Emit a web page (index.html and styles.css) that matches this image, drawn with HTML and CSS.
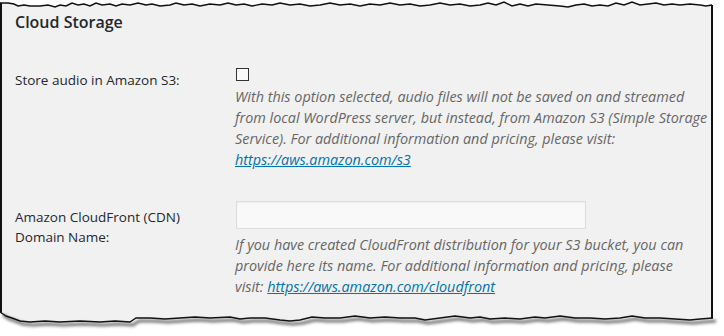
FILE: index.html
```html
<!DOCTYPE html>
<html lang="en">

<head>
    <meta charset="UTF-8">
    <meta name="viewport" content="width=device-width, initial-scale=1.0">
    <title>Cloud Storage</title>
    <link rel="stylesheet" href="styles.css">
</head>

<body>

    <div class="page">
        <div class="sheet">
            <h2 class="title">Cloud Storage</h2>

            <div class="form-row row-audio">
                <label class="row-label" for="storeS3">Store audio in Amazon S3:</label>
                <div class="row-field">
                    <input type="checkbox" id="storeS3" class="checkbox">
                    <p class="description">With this option selected, audio files will not be saved on and streamed from local WordPress server, but instead, from Amazon S3 (Simple Storage Service). For additional information and pricing, please visit: <a href="#">https://aws.amazon.com/s3</a></p>
                </div>
            </div>

            <div class="form-row row-cdn">
                <label class="row-label" for="cdnDomain">Amazon CloudFront (CDN) Domain Name:</label>
                <div class="row-field">
                    <input type="text" id="cdnDomain" class="text-input">
                    <p class="description">If you have created CloudFront distribution for your S3 bucket, you can provide here its name. For additional information and pricing, please visit: <a href="#">https://aws.amazon.com/cloudfront</a></p>
                </div>
            </div>
        </div>

        <!-- torn paper edges drawn over the sheet -->
        <svg class="edges" width="724" height="336" viewBox="0 0 724 336">
            <defs>
                <filter id="soft" x="-5%" y="-50%" width="110%" height="200%">
                    <feGaussianBlur stdDeviation="1.6" />
                </filter>
            </defs>
            <path fill="#fff" d="M0,0 H724 V336 H713 V5 L711,5 706,6 700,5 690,4 680,5 672,4 664,5 656,3 648,4 640,5 632,2 624,5 616,3 608,6 600,5 592,6 584,4 576,5 568,7 560,6 548,5 536,4 528,6 520,4 512,6 504,2 496,5 488,3 480,5 470,6 460,4 450,5 440,3 430,5 420,6 410,4 400,5 390,3 380,5 370,4 360,6 350,4 340,5 330,3 320,5 310,6 300,4 290,5 280,3 272,5 262,4 252,6 244,4 236,5 228,3 220,5 210,4 200,6 192,4 184,5 176,3 170,5 160,6 152,4 146,5 138,3 130,5 122,4 116,6 110,4 102,5 96,3 90,6 84,4 78,5 72,3 66,6 60,5 55,7 48,5 40,6 30,6 24,5 18,6 14,4 8,3 0,3 Z" />
            <polyline fill="none" stroke="#111" stroke-width="1.4" points="0,3 8,3 14,4 18,6 24,5 30,6 40,6 48,5 55,7 60,5 66,6 72,3 78,5 84,4 90,6 96,3 102,5 110,4 116,6 122,4 130,5 138,3 146,5 152,4 160,6 170,5 176,3 184,5 192,4 200,6 210,4 220,5 228,3 236,5 244,4 252,6 262,4 272,5 280,3 290,5 300,4 310,6 320,5 330,3 340,5 350,4 360,6 370,4 380,5 390,3 400,5 410,4 420,6 430,5 440,3 450,5 460,4 470,6 480,5 488,3 496,5 504,2 512,6 520,4 528,6 536,4 548,5 560,6 568,7 576,5 584,4 592,6 600,5 608,6 616,3 624,5 632,2 640,5 648,4 656,3 664,5 672,4 680,5 690,4 700,5 706,6 712,5" />

            <path fill="#fff" d="M0,312 L6,316 12,318 20,321 30,322 45,321 60,322 80,321 100,322 115,321 130,322 136,318 150,318 165,319 180,318 195,317 210,318 230,317 240,319 250,318 265,318 280,320 290,321 300,320 312,317 325,318 340,318 355,316 370,318 385,317 400,318 415,318 425,320 440,318 455,316 470,318 480,317 490,319 505,318 520,319 535,317 545,318 560,316 575,318 590,318 605,319 620,318 632,316 645,318 660,318 675,319 690,320 700,319 713,318 H724 V336 H0 Z" />
            <polyline fill="none" stroke="#000" stroke-opacity="0.55" stroke-width="3" filter="url(#soft)" points="3,315 9,319 15,321 23,324 33,325 48,324 63,325 83,324 103,325 118,324 133,325 139,321 153,321 168,322 183,321 198,320 213,321 233,320 243,322 253,321 268,321 283,323 293,324 303,323 315,320 328,321 343,321 358,319 373,321 388,320 403,321 418,321 428,323 443,321 458,319 473,321 483,320 493,322 508,321 523,322 538,320 548,321 563,319 578,321 593,321 608,322 623,321 635,319 648,321 663,321 678,322 693,323 703,322 716,321" />
            <polyline fill="none" stroke="#111" stroke-width="1.4" points="0,312 6,316 12,318 20,321 30,322 45,321 60,322 80,321 100,322 115,321 130,322 136,318 150,318 165,319 180,318 195,317 210,318 230,317 240,319 250,318 265,318 280,320 290,321 300,320 312,317 325,318 340,318 355,316 370,318 385,317 400,318 415,318 425,320 440,318 455,316 470,318 480,317 490,319 505,318 520,319 535,317 545,318 560,316 575,318 590,318 605,319 620,318 632,316 645,318 660,318 675,319 690,320 700,319 713,318" />
        </svg>
    </div>

</body>

</html>
```

FILE: styles.css
```css
body {
    margin: 0;
    background-color: #ffffff;
    font-family: 'Open Sans', 'Noto Sans', sans-serif;
    color: #23282d;
}

.page {
    position: relative;
    width: 724px;
    height: 336px;
    overflow: hidden;
}

.sheet {
    box-sizing: border-box;
    width: 713px;
    height: 336px;
    padding: 12px 0 0 13px;
    background-color: #f1f1f1;
    border-left: 2px solid #111;
    border-right: 2px solid #111;
    box-shadow: 3px 0 3px rgba(0, 0, 0, 0.45);
}

.title {
    margin: 0;
    font-size: 16px;
    line-height: 20px;
    font-weight: 600;
}

.form-row {
    display: grid;
    grid-template-columns: 220px 474px;
}

.row-audio {
    margin-top: 36px;
}

.row-cdn {
    margin-top: 31px;
}

.row-label {
    font-size: 13.5px;
    line-height: 20px;
}

.row-audio .row-label {
    padding-top: 2px;
}

.row-cdn .row-label {
    padding-top: 6px;
    width: 180px;
}

.checkbox {
    display: block;
    appearance: none;
    box-sizing: border-box;
    width: 13px;
    height: 13px;
    margin: 0 0 0 1px;
    border: 1px solid #333;
    background-color: #fafafa;
}

.text-input {
    display: block;
    box-sizing: border-box;
    width: 350px;
    height: 28px;
    margin: 0 0 0 1px;
    border: 1px solid #dddddd;
    background-color: #f9f9f9;
    box-shadow: inset 0 1px 2px rgba(0, 0, 0, 0.05);
}

.description {
    margin: 5px 0 0;
    font-size: 14.4px;
    line-height: 21px;
    font-style: italic;
    color: #666;
}

.row-cdn .description {
    max-width: 464px;
}

.description a {
    color: #0073aa;
}

.edges {
    position: absolute;
    top: 0;
    left: 0;
    pointer-events: none;
}
```
